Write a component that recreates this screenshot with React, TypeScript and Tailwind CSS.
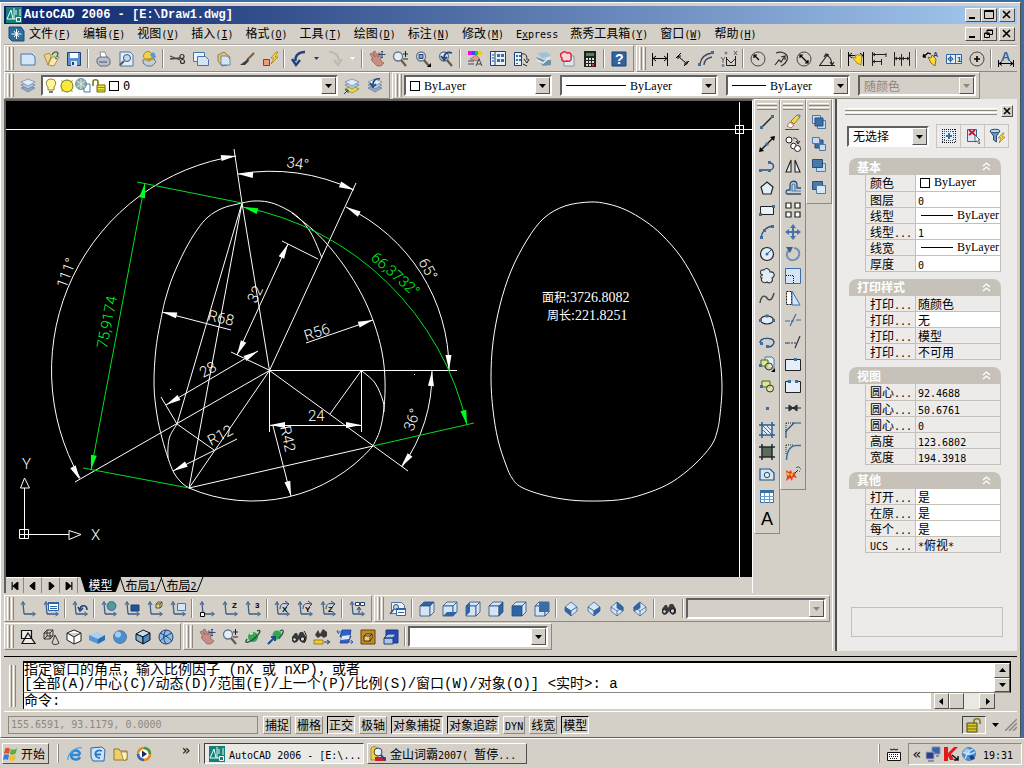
import type { ReactNode } from "react";
import { clsx } from "clsx";

type Point = [number, number];

const NAVY = "#1f3f73";
const BLUE = "#3a6ea5";
const PALE = "#d3e5f7";

// SimSun-like setting: full-width glyphs at 12px, latin at half that advance
function T({ text }: { text: string }) {
  return (
    <>
      {text.split(/([\u2e80-\uffef]+)/).map((part, i) =>
        i % 2 ? (
          part
        ) : part ? (
          <span key={i} className="whitespace-pre font-['DejaVu_Sans_Mono',monospace] text-[10px] leading-none">
            {part}
          </span>
        ) : null
      )}
    </>
  );
}

/* ---------- icons ---------- */

const hand = (
  <>
    <path d="M1 3l2-1 3 4-2-5 2-1 3 6 0-4 2 0 1 8 3 2-3 3H8L4 11 2 8l2 0z" fill="#c98d84" stroke="#7c4f4b" strokeWidth=".6" />
    <path d="M13 0v7M9.500 3.500h7M12 1l1-1 1 1M12 6l1 1 1-1" stroke={NAVY} fill="none" strokeWidth=".9" />
  </>
);
const lens = (
  <>
    <circle cx="6" cy="5.500" r="4.500" fill="#e3eef7" stroke="#667788" strokeWidth="1.300" />
    <path d="M9 9l5 6" stroke="#6b5a48" strokeWidth="2.200" />
  </>
);
const axes = (
  <>
    <path d="M3 2l1 11M4 13h10" stroke="#3b5d8c" strokeWidth="1.300" fill="none" />
    <path d="M1 4l2-3.500L5 4M12.500 11l3 2-3 2" stroke="#3b5d8c" fill="none" />
  </>
);
const bolt = <path d="M14 1L9 7h3l-3 6 7-7h-3l3-5z" fill="#ffd83a" stroke="#8a6b00" strokeWidth=".6" />;
const globe = (
  <>
    <circle cx="8" cy="8" r="6.500" fill="#4c8fd0" stroke="#2a5a94" strokeWidth=".6" />
    <circle cx="6" cy="5.500" r="3" fill="#b9dbf6" opacity=".8" />
  </>
);
const binoculars = (
  <>
    <path d="M1 8l3-4 2 0 1 3 2-4 3 0 3 5v4l-3 2-3-2-1-2-2 3-3 1-2-2z" fill="#3a3a3a" />
    <circle cx="3.500" cy="10.500" r="1.900" fill="#c9d2da" stroke="#111" />
    <circle cx="11.500" cy="10" r="2.200" fill="#c9d2da" stroke="#111" />
  </>
);
const sheets = (
  <>
    <path d="M1 10l7 4 7-4-7-3z" fill="#8fa9c4" stroke="#54718f" strokeWidth=".6" />
    <path d="M1 7l7 4 7-4-7-3z" fill="#b4cbe0" stroke="#54718f" strokeWidth=".6" />
    <path d="M1 4l7 4 7-4-7-3z" fill="#e0ecf7" stroke="#54718f" strokeWidth=".6" />
  </>
);

function Cube({ top = PALE, left = PALE, right = PALE }: { top?: string; left?: string; right?: string }) {
  return (
    <g stroke="#294f7c" strokeWidth=".8">
      <path d="M1 5l4-4h10l-4 4z" fill={top} />
      <path d="M1 5h10v10H1z" fill={left} />
      <path d="M11 5l4-4v10l-4 4z" fill={right} />
    </g>
  );
}

function Iso({ top = PALE, left = PALE, right = PALE }: { top?: string; left?: string; right?: string }) {
  return (
    <g stroke="#3c6591" strokeWidth=".8">
      <path d="M8 1l6 5-6 4-6-4z" fill={top} />
      <path d="M2 6l6 4v5l-6-5z" fill={left} />
      <path d="M14 6l-6 4v5l6-5z" fill={right} />
    </g>
  );
}

function Letter({ x, y, size = 8, fill = "#000", children }: { x: number; y: number; size?: number; fill?: string; children: string }) {
  return (
    <text x={x} y={y} fontSize={size} fill={fill} fontWeight="bold" fontFamily="Liberation Sans, sans-serif">
      {children}
    </text>
  );
}

const icons: Record<string, ReactNode> = {
  new: <path d="M1 3h11l3 3v8H1z" fill={PALE} stroke="#4a77a8" />,
  open: (
    <>
      <path d="M1 4l5-2 2 3-3 9z" fill="#f0d67c" stroke="#8c7431" strokeWidth=".7" />
      <path d="M5 14l4-8h7l-5 9z" fill="#fbe9a3" stroke="#8c7431" strokeWidth=".7" />
      <path d="M9 4c1-3 4-4 6-2l-1 4M12 7l2 1" stroke="#3c6b40" fill="none" strokeWidth="1.300" />
    </>
  ),
  save: (
    <>
      <path d="M1.500 1.500h13v13h-13z" fill="#5c93cf" stroke={NAVY} />
      <path d="M4 2h8v5H4z" fill="#fff" />
      <path d="M5 10h6v5H5z" fill="#dbe6f0" />
      <path d="M6 11h2v3H6z" fill={NAVY} />
    </>
  ),
  print: (
    <>
      <path d="M5 1h5l2 6H6z" fill="#fff" stroke="#667" strokeWidth=".7" />
      <path d="M2 8l3-2h8l2 3v4l-3 2H5l-3-3z" fill="#b6bfce" stroke="#4c566a" strokeWidth=".8" />
      <path d="M4 11h8" stroke="#4c566a" />
    </>
  ),
  preview: (
    <>
      <path d="M2 1h10l3 3v11H2z" fill="#e1edf8" stroke="#4a77a8" />
      <circle cx="9" cy="7" r="3.500" fill="#c0d8ee" stroke="#456" />
      <path d="M6 10l-4 4" stroke="#555" strokeWidth="2" />
    </>
  ),
  publish: (
    <>
      <circle cx="7" cy="5" r="4.500" fill="#f4d04a" stroke="#8c6a14" strokeWidth=".7" />
      <path d="M2 9l4-1h7l2 3-4 4H6l-4-3z" fill="#bfd0e2" stroke="#45607f" strokeWidth=".8" />
      <path d="M9 3l4-2 2 5-3 3z" fill="#5b99d4" />
      <path d="M3 8l5 2 5-3" stroke="#c99a1c" strokeWidth="1.500" fill="none" />
    </>
  ),
  cut: (
    <>
      <path d="M0 5l10 4M0 8l10-1" stroke="#444" strokeWidth="1.300" />
      <circle cx="12" cy="5.500" r="2" fill="none" stroke="#333" strokeWidth="1.200" />
      <circle cx="12.500" cy="10.500" r="2" fill="none" stroke="#333" strokeWidth="1.200" />
    </>
  ),
  copy: (
    <>
      <path d="M.5 1.500h11v9H.5z" fill="#eaf3fb" stroke="#4a77a8" />
      <path d="M4.500 5.500h8l3 3v6h-11z" fill={PALE} stroke="#4a77a8" />
    </>
  ),
  paste: (
    <>
      <path d="M2 4l6-3 6 5-2 8-6 1-4-5z" fill="#e2c779" stroke="#7b6524" strokeWidth=".8" />
      <path d="M5 5h6l3 3v6H5z" fill={PALE} stroke="#4a77a8" strokeWidth=".8" />
    </>
  ),
  brush: (
    <>
      <path d="M15 2l-7 7" stroke="#7d5a3a" strokeWidth="2" />
      <path d="M9 8l1 2-4 4H1l4-3z" fill="#3a3a3a" />
    </>
  ),
  match: (
    <>
      {bolt}
      <path d="M1.500 8.500h6v6h-6z" fill="#f59a76" stroke="#1d5fa8" />
    </>
  ),
  undo: <path d="M14 1C7 1 4 5 4.500 10M1 8l4 6 4-5" fill="none" stroke="#24417a" strokeWidth="2.400" />,
  redo: <path d="M2 1c7 0 10 4 9.500 9M15 8l-4 6-4-5" fill="none" stroke="#bdb9b0" strokeWidth="2.200" />,
  pan: hand,
  zoomRt: (
    <>
      {lens}
      <path d="M11 3h5M13.500 0v6M11 8h5" stroke="#222" />
    </>
  ),
  zoomWin: (
    <>
      {lens}
      <path d="M4 3.500h4v4H4z" fill="#7fa9d4" stroke={NAVY} />
      <path d="M16 12v4h-4z" />
    </>
  ),
  zoomPrev: (
    <>
      {lens}
      <path d="M14 2C9 0 6 3 6 7M3 5l3 4 3-3" fill="none" stroke="#24417a" strokeWidth="1.800" />
    </>
  ),
  props: (
    <>
      <path d="M1 0h4v4H1z" fill="#f0f" />
      <path d="M5 0h3v4H5z" fill="#44f" />
      <path d="M8 0h3v4H8z" fill="#0c6" />
      <path d="M11 0h4v4h-4z" fill="#fc0" />
      <path d="M3 8l6-4 4 4-3 2z" fill="#d5a08f" stroke="#855" strokeWidth=".6" />
      <path d="M1 10h6M1 13h6M9 15l3-7 3 7M10 13h4" stroke="#446" fill="none" />
    </>
  ),
  designCenter: (
    <>
      <path d="M.5.500h15v14H.5z" fill="#eaf2fa" stroke={NAVY} />
      <path d="M5 1v13M2 4h2M2 7h2M2 10h2" stroke={NAVY} />
      <path d="M7 3h3v3H7zM11 3h3v3h-3zM7 8h3v3H7zM11 8h3v3h-3z" fill={BLUE} />
    </>
  ),
  toolPalette: (
    <>
      <path d="M1.500 1.500h7v13h-7z" fill="#eaf2fa" stroke={NAVY} />
      <path d="M3 4h2v2H3zM3 8h2v2H3zM3 12h2v1H3zM6 4h2v2H6zM6 8h2v2H6z" fill={BLUE} />
      <path d="M9 3c4-1 5 2 5 6M11 8l3 4 2-4M10 13l4 2" stroke="#222" fill="none" />
    </>
  ),
  sheetSet: (
    <>
      <path d="M1 2l10-1 4 4-9 2z" fill="#9ec2dc" />
      <path d="M0 6l8 3h7v5l-8 1z" fill="#6d93a9" />
      <path d="M1 9l6 3 7-6" stroke="#e6f1f7" strokeWidth="1.500" fill="none" />
    </>
  ),
  markup: (
    <>
      <path d="M5 5h10v10H5z" fill="#dce8f3" stroke="#899" />
      <path d="M3 2c2-2 4-1 5 0 3-1 5 1 4 4 1 3-1 5-4 4-3 1-6 0-5-3-2-2-2-4 0-5z" fill="#fbd5da" stroke="#d4213c" strokeWidth="1.400" />
    </>
  ),
  calc: (
    <>
      <path d="M2 0h12v16H2z" fill="#222" />
      <path d="M4 2h8v3H4z" fill="#3e8e4e" />
      <path d="M4 7h2v2H4zM7 7h2v2H7zM10 7h2v2h-2zM4 10h2v2H4zM7 10h2v2H7zM10 10h2v2h-2zM4 13h2v2H4zM7 13h2v2H7z" fill="#ddd" />
      <path d="M10 13h2v2h-2z" fill="#e33" />
    </>
  ),
  help: (
    <>
      <path d="M1 1h14v14H1z" fill="#2f65a7" stroke={NAVY} />
      <Letter x={4} y={13} size={14} fill="#fff">?</Letter>
    </>
  ),
  dimLinear: <path d="M.5 2v13M15.500 2v13M1 7.500h14M4 5L1 7.500 4 10M12 5l3 2.500-3 2.500" stroke="#000" fill="none" />,
  dimAligned: <path d="M1 7l5-5M9 15l5-5M3 5l9 8M3 8V5h3M12 10v3H9" stroke="#000" fill="none" />,
  dimArc: (
    <>
      <path d="M2 13C3 6 7 3 14 2M6 14c0-4 3-7 8-8" stroke="#445" fill="none" strokeWidth="1.300" />
      <path d="M0 12h3v3H0zM13 0h3v3h-3z" fill={BLUE} />
    </>
  ),
  dimOrdinate: (
    <>
      <path d="M5.500 6v8.500H15M5 7l5 5 5-5M14.500 5v10" stroke="#222" fill="none" />
      <path d="M0 6l2 3 2-3M2 9v3M13 0l3 4M16 0l-3 4" stroke="#446" fill="none" strokeWidth=".8" />
      <circle cx="5" cy="2" r="1" fill="none" stroke="#446" strokeWidth=".7" />
      <circle cx="2" cy="14.500" r="1" fill="none" stroke="#446" strokeWidth=".7" />
    </>
  ),
  dimRadius: (
    <>
      <circle cx="8" cy="8" r="7" fill="none" stroke="#444" />
      <path d="M9 9L4 4M4 7V4h3" stroke="#000" fill="none" strokeWidth="1.200" />
    </>
  ),
  dimJogged: <path d="M3 2c7-3 13 2 11 7-1 3-4 5-6 6M2 14l4-5 2 2 4-6M8 6l4-1v4" stroke="#333" fill="none" strokeWidth="1.200" />,
  dimDiameter: (
    <>
      <circle cx="8" cy="8" r="7" fill="none" stroke="#444" />
      <path d="M4 4l8 8M4 7V4h3M12 9v3H9" stroke="#000" fill="none" strokeWidth="1.200" />
    </>
  ),
  dimAngular: <path d="M0 14.500h16M1 14L9 3M6 4c5 1 6 4 7 9M5 6l2-3 3 1M11 11l2 3 2-3" stroke="#222" fill="none" strokeWidth="1.100" />,
  dimQuick: (
    <>
      <path d="M.5 1v14M15.500 1v14M1 4.500h14M4 2L1 4.500 4 7M12 2l3 2.500L12 7" stroke="#000" fill="none" />
      <path d="M14 4l-1 10-4-2-5-6 4 1-1-3z" fill="#ffd83a" stroke="#8a6b00" strokeWidth=".7" />
    </>
  ),
  dimBaseline: <path d="M1.500 1v14M1 3.500h14M15 2v4M1 10.500h9M10.500 8v6M4 2L2 3.500 4 5M4 9l-2 1.500L4 12" stroke="#222" fill="none" />,
  dimContinue: <path d="M.5 1v14M7.500 3v12M15.500 1v14M1 7.500h14M3 6L1 7.500 3 9M5 6l2 1.500L5 9M10 6L8 7.500 10 9M13 6l2 1.500L13 9" stroke="#222" fill="none" />,
  leader: (
    <>
      <path d="M0 6l5-4 3 1M0 6l3 0M0 6l1-3" stroke="#000" fill="none" strokeWidth="1.300" />
      <path d="M9 4l4 4-1 7-4-3-3-6 3 1z" fill="#ffd83a" stroke="#6b5a00" strokeWidth=".8" />
      <Letter x={10} y={6} size={7} fill={NAVY}>A</Letter>
    </>
  ),
  tolerance: (
    <>
      <path d="M.5 3.500h15v9H.5z" fill="#e3effa" stroke="#2f65a7" />
      <path d="M9.500 3v10M4.500 4.500v7M1.500 8h6" stroke="#2f65a7" />
      <circle cx="4.500" cy="8" r="2" fill="none" stroke="#2f65a7" />
      <Letter x={11} y={11} size={8} fill={NAVY}>1</Letter>
    </>
  ),
  centerMark: (
    <>
      <circle cx="8" cy="8" r="7" fill="none" stroke="#444" />
      <path d="M5 8h6M8 5v6" stroke="#000" strokeWidth="1.600" />
    </>
  ),
  dimEdit: (
    <>
      <Letter x={3} y={10} size={13} fill="#2f65a7">A</Letter>
      <path d="M.5 9v7M15.500 9v7M1 12.500h14M4 10.500l-3 2 3 2M12 10.500l3 2-3 2" stroke="#000" fill="none" />
    </>
  ),
  layers: sheets,
  layerCurrent: (
    <>
      <path d="M1 11l7 4 7-4-7-3z" fill="#f2d43c" stroke="#7b6c1a" strokeWidth=".6" />
      <path d="M1 7l7 4 7-4-7-3z" fill="#b4cbe0" stroke="#54718f" strokeWidth=".6" />
      <path d="M1 4l7 4 7-4-7-3z" fill="#e0ecf7" stroke="#54718f" strokeWidth=".6" />
      <path d="M0 16l4-4M4 15v-3H1" stroke={NAVY} fill="none" />
    </>
  ),
  layerPrev: (
    <>
      {sheets}
      <path d="M13 1C8 0 6 3 6 7M3 5l3 4 3-3" stroke={NAVY} fill="none" strokeWidth="1.600" />
    </>
  ),
  bulb: (
    <>
      <path d="M8 1c-5 0-6 5-3 8v3h6V9c3-3 2-8-3-8z" fill="#fdf79a" stroke="#8d8330" />
      <path d="M6 13h4v2H6z" fill="#777" />
    </>
  ),
  sun: (
    <>
      <path d="M2 2l3 1 6 0 3-1-1 3v6l1 3-3-1H5l-3 1 1-3V5z" fill="#e8b31f" />
      <circle cx="8" cy="8" r="6" fill="#ffe63c" stroke="#5d7b36" />
    </>
  ),
  freeze: (
    <>
      <path d="M9 6h6v8H9z" fill="#fff" stroke="#4a77a8" />
      <circle cx="6" cy="6" r="5.500" fill="#8eb0a8" stroke="#527483" strokeWidth=".7" />
      <path d="M2 3l8 6M10 3L2 9M6 1v10" stroke="#dceae6" />
    </>
  ),
  unlock: (
    <>
      <path d="M2 8V4c0-3 5-3 5 0v3" fill="none" stroke="#7c7a1c" strokeWidth="1.600" />
      <path d="M6 7h8v7H6z" fill="#f3e637" stroke="#6c6a18" />
      <path d="M6 9.500h8M6 12h8" stroke="#8f8c20" />
    </>
  ),
  line: (
    <>
      <path d="M2 14L14 2" stroke="#222" strokeWidth="1.300" />
      <path d="M1 12h3v3H1zM12 1h3v3h-3z" fill={BLUE} />
    </>
  ),
  xline: (
    <>
      <path d="M2 14L14 2" stroke="#111" strokeWidth="1.300" />
      <path d="M0 16l1-5 4 4zM16 0l-1 5-4-4z" />
      <path d="M6.500 6.500h3v3h-3z" fill={BLUE} />
    </>
  ),
  pline: (
    <>
      <path d="M2 12h8c6 0 6-8 0-7" stroke="#26507f" fill="none" strokeWidth="1.400" />
      <path d="M0 11h3v3H0zM9 3h3v3H9zM9 11h3v3H9z" fill={BLUE} />
    </>
  ),
  polygon: <path d="M8 2l6 5-2 7H4L2 7z" fill="#e1eef8" stroke="#222" strokeWidth="1.200" />,
  rect: (
    <>
      <path d="M1.500 4.500h13v8h-13z" fill="#e9f2fa" stroke="#222" />
      <path d="M0 11h3v3H0zM13 3h3v3h-3z" fill={BLUE} />
    </>
  ),
  arc: (
    <>
      <path d="M2 14C3 7 7 3 14 2" stroke="#26507f" fill="none" strokeWidth="1.300" />
      <path d="M1 12h3v3H1zM4 5h3v3H4zM12 1h3v3h-3z" fill={BLUE} />
    </>
  ),
  circle: (
    <>
      <circle cx="8" cy="8" r="6.500" fill="#e1eef8" stroke="#222" strokeWidth="1.200" />
      <path d="M8 8l4-4" stroke="#26507f" />
      <circle cx="8" cy="8" r="1.500" fill={BLUE} />
    </>
  ),
  cloud: <path d="M4 7C0 6 1 1 5 2c2-3 6-1 6 2 4-1 6 4 2 6 2 4-3 6-5 4-3 2-7-1-5-4-2 0-2-3 1-3z" fill="#e1eef8" stroke="#333" strokeWidth="1.100" />,
  spline: <path d="M1 13C2 5 6 5 8 8s5 3 7-5" fill="none" stroke="#444" strokeWidth="1.400" />,
  ellipse: (
    <>
      <ellipse cx="8" cy="8" rx="6.500" ry="4" fill="#e1eef8" stroke="#222" strokeWidth="1.200" />
      <path d="M0 7h3v3H0zM13 7h3v3h-3zM6.500 2.500h3v3h-3z" fill={BLUE} />
    </>
  ),
  ellipseArc: (
    <>
      <path d="M1 9c0-6 13-6 14-1 0 3-3 5-6 5" fill="none" stroke="#26507f" strokeWidth="1.400" />
      <path d="M1 8h3v3H1zM7 11h3v3H7z" fill={BLUE} />
    </>
  ),
  insert: (
    <>
      <path d="M6 1h7l2 2v9H6z" fill="#e1eef8" stroke="#4a77a8" />
      <path d="M2 4h7v6H2z" fill="#dce98a" stroke="#4e6130" />
      <circle cx="10" cy="10.500" r="3.500" fill="#e9ef9a" fillOpacity=".6" stroke="#333" />
      <path d="M0 8h3v3H0z" fill={BLUE} />
      <path d="M16 12v4h-4z" />
    </>
  ),
  block: (
    <>
      <path d="M3 3h8v6H3z" fill="#dce98a" stroke="#4e6130" />
      <circle cx="11" cy="10.500" r="3.500" fill="#e9ef9a" fillOpacity=".6" stroke="#333" />
      <path d="M1 7h3v3H1z" fill={BLUE} />
    </>
  ),
  point: <path d="M7 7h3v3H7z" fill={BLUE} />,
  hatch: (
    <>
      <path d="M3 3h10v10H3z" fill="#e1eef8" />
      <path d="M4 8l4 4M4 4l8 8M8 4l4 4" stroke="#3a6ea5" />
      <path d="M3 0v16M13 0v16M0 3h16M0 13h16" stroke="#2d5c8e" strokeWidth="1.500" />
    </>
  ),
  gradient: (
    <>
      <path d="M3 3h10v10H3z" fill="#5f6a57" />
      <path d="M3 0v16M13 0v16M0 3h16M0 13h16" stroke="#1c2a36" strokeWidth="1.500" />
    </>
  ),
  region: (
    <>
      <path d="M1 3h10l4 4v7H1z" fill={PALE} stroke="#26507f" strokeWidth="1.200" />
      <circle cx="8" cy="9" r="2.700" fill="#ece9d8" stroke="#26507f" />
    </>
  ),
  table: (
    <>
      <path d="M1.500 2.500h13v12h-13z" fill="#fff" stroke={BLUE} />
      <path d="M1 2h14v3H1z" fill={BLUE} />
      <path d="M1 8.500h14M1 11.500h14M5.500 5v10M10.500 5v10" stroke="#6a9ad0" />
    </>
  ),
  mtext: (
    <text x="2" y="15" fontSize="18" fontFamily="Liberation Sans, sans-serif">
      A
    </text>
  ),
  erase: (
    <>
      <path d="M6 7l6-6 3 2-6 7z" fill="#f2d84a" stroke="#6c5a18" strokeWidth=".7" />
      <path d="M5 8l4 3-3 3-4-2z" fill="#fff" stroke="#844" strokeWidth=".7" />
      <path d="M6 7l3 3-1 1-3-3z" fill="#e0813a" />
      <path d="M12 1l2-1 2 2-1 1z" fill="#5c93cf" />
      <path d="M0 15.500h14" stroke="#8a3a1a" />
    </>
  ),
  dup: (
    <>
      <circle cx="4" cy="4" r="3" fill="#fff" stroke="#222" />
      <circle cx="8.500" cy="10" r="2.800" fill="#fff" stroke="#222" />
      <circle cx="12.500" cy="12.500" r="3" fill="#fff" stroke="#222" />
      <path d="M8 2c4 0 5 2 5 5M11 5l2 3 2-3" stroke="#222" fill="none" />
    </>
  ),
  mirror: <path d="M6 2v12H1zM10 2v12h5z" fill="#e1eef8" stroke="#222" strokeWidth="1.100" />,
  offset: (
    <>
      <path d="M16 14H2c-2-1-1-4 1-4h2V5c0-5 7-5 7 0v3h4" stroke="#26507f" fill="none" strokeWidth="1.300" />
      <path d="M16 11H7V5.500c0-2 3-2 3 0V11" stroke="#4a7fb8" fill="none" strokeWidth="1.200" />
    </>
  ),
  array: <path d="M1 1h5v5H1zM10 1h5v5h-5zM1 10h5v5H1zM10 10h5v5h-5z" fill="#fff" stroke="#222" strokeWidth="1.200" />,
  move: <path d="M8 0l3 4H9v3h3V5l4 3-4 3V9H9v3h2l-3 4-3-4h2V9H4v2L0 8l4-3v2h3V4H5z" fill="#4674a8" />,
  rotate: (
    <>
      <path d="M9 2c4 0 6 4 5 7-1 5-8 7-11 3-2-3-1-6 1-8" stroke="#6d90b5" strokeWidth="2" fill="none" />
      <path d="M1 1h7L5 7z" fill="#3a5f88" />
    </>
  ),
  scale: (
    <>
      <path d="M.5.500h15v15H.5z" fill={PALE} stroke="#3a6ea5" />
      <path d="M1 7.500h7.500V15" stroke="#111" strokeDasharray="1 1" fill="none" />
    </>
  ),
  stretch: (
    <>
      <path d="M1.500 1.500h5v13h-5z" fill="#fff" stroke="#111" strokeDasharray="2 1" />
      <path d="M7 1l8 14H7z" fill={PALE} stroke="#3a6ea5" />
    </>
  ),
  trim: <path d="M0 9h5M11 8l5 0M6 9h1M8 9h1M5 14L11 2" stroke="#3a6ea5" strokeWidth="1.200" />,
  extend: <path d="M0 9h5M6 9h2M9 9h2M10 14l5-12" stroke="#334" strokeWidth="1.200" />,
  breakPt: (
    <>
      <path d="M.5 3.500h15v11H.5z" fill="#e4eff9" stroke="#222" />
      <path d="M9 2h3v3H9z" fill={BLUE} />
    </>
  ),
  breakLn: (
    <>
      <path d="M4 3.500H.5v11h15v-11H12" fill="#e4eff9" stroke="#222" />
      <path d="M3 2h3v3H3zM10 2h3v3h-3z" fill={BLUE} />
    </>
  ),
  join: <path d="M0 8h16M4 5l4 3-4 3zM12 5L8 8l4 3z" stroke="#223" fill="#345" />,
  chamfer: (
    <>
      <path d="M1 1h7M1 1v9" stroke="#222" strokeDasharray="1 1" />
      <path d="M8 1h8M1 16V9l8-8" stroke="#26507f" fill="none" strokeWidth="1.200" />
    </>
  ),
  fillet: (
    <>
      <path d="M1 1h7M1 1v9" stroke="#222" strokeDasharray="1 1" />
      <path d="M16 1.500h-5C5 2 2 6 1.500 16" stroke="#3a6ea5" fill="none" strokeWidth="1.500" />
    </>
  ),
  explode: (
    <>
      <path d="M1 4l3 2 2-2 1 3 4-1-1 3 2 3-4-1-1 4-2-3-4 3 1-4z" fill="#e2401c" />
      <path d="M1 6l4 2-2 2zM5 8l3-1-1 4z" fill="#ffc83c" />
      <path d="M10 7l3-3" stroke="#222" />
      <path d="M13 0v2M15 3h1M11 1l1 1M15 1l-1 1M14 5l1 1" stroke="#2f65a7" />
    </>
  ),
  orderFront: (
    <>
      <path d="M1.500 1.500h8v8h-8zM6.500 6.500h8v8h-8z" fill="#c5dcf2" stroke="#54799f" />
      <path d="M4 4h8v8H4z" fill="#3a6ea5" stroke="#274f7c" />
    </>
  ),
  orderBack: (
    <>
      <path d="M4 4h8v8H4z" fill="#3a6ea5" stroke="#274f7c" />
      <path d="M1.500 1.500h7v6h-7zM8.500 8.500h6v6h-6z" fill="#c5dcf2" stroke="#54799f" />
    </>
  ),
  orderAbove: (
    <>
      <path d="M5.500 5.500h9v8h-9z" fill="#c5dcf2" stroke="#54799f" />
      <path d="M1.500 1.500h10v8h-10z" fill="#4a78a8" stroke="#274f7c" />
    </>
  ),
  orderUnder: (
    <>
      <path d="M1.500 1.500h10v8h-10z" fill="#4a78a8" stroke="#274f7c" />
      <path d="M5.500 5.500h9v8h-9z" fill="#d8e7f5" stroke="#54799f" />
    </>
  ),
  ucs: axes,
  ucsNamed: (
    <>
      {axes}
      <path d="M5.500 1.500h10v8h-10z" fill="#fff" stroke="#2f65a7" />
      <path d="M5 1h11v2H5zM7 5h7v1H7zM7 7h7v1H7z" fill="#2f65a7" />
    </>
  ),
  ucsPrev: (
    <>
      {axes}
      <path d="M15 9c0-5-6-6-7-1M6 6l2 4 3-3" stroke="#24417a" fill="none" strokeWidth="1.600" />
    </>
  ),
  ucsWorld: (
    <>
      {axes}
      <circle cx="10.500" cy="5" r="4.500" fill="#4e93c8" stroke="#245" strokeWidth=".6" />
      <path d="M8 3l3-1 2 3-3 3z" fill="#4aa866" />
    </>
  ),
  ucsObject: (
    <>
      {axes}
      <path d="M7 4h8v6H7z" fill="#1f569a" stroke={NAVY} />
    </>
  ),
  ucsFace: (
    <>
      {axes}
      <path d="M9 3l2-2h4v4l-2 2H9z" fill="#e5dc7a" stroke="#333" strokeWidth=".8" />
      <path d="M9 3h4v4M13 3l2-2" stroke="#333" fill="none" strokeWidth=".8" />
    </>
  ),
  ucsView: (
    <>
      {axes}
      <path d="M7.500 2.500h8v7h-8z" fill={PALE} stroke="#4a77a8" />
    </>
  ),
  ucsOrigin: (
    <>
      {axes}
      <path d="M1.500 11.500h4v4h-4z" fill="#fff" stroke="#000" />
    </>
  ),
  ucsZ: (
    <>
      {axes}
      <Letter x={10} y={7}>Z</Letter>
    </>
  ),
  ucs3: (
    <>
      {axes}
      <Letter x={10} y={7}>3</Letter>
    </>
  ),
  ucsRotX: (
    <>
      {axes}
      <path d="M6 8c0-6 4-6 8-5M11 0l4 3-3 3" stroke="#24417a" fill="none" />
      <Letter x={8} y={11}>X</Letter>
    </>
  ),
  ucsRotY: (
    <>
      {axes}
      <path d="M6 8c0-6 4-6 8-5M11 0l4 3-3 3" stroke="#24417a" fill="none" />
      <Letter x={8} y={11}>Y</Letter>
    </>
  ),
  ucsRotZ: (
    <>
      {axes}
      <path d="M6 8c0-6 4-6 8-5M11 0l4 3-3 3" stroke="#24417a" fill="none" />
      <Letter x={8} y={11}>Z</Letter>
    </>
  ),
  ucsApply: (
    <>
      {axes}
      <path d="M6.500 1.500h4v3h-4zM11.500 1.500h4v3h-4z" fill="#fff" stroke={NAVY} />
      <path d="M10 12V7M8 9l2-3 2 3" stroke={NAVY} fill="none" />
    </>
  ),
  namedViews: (
    <>
      <path d="M1.500 1.500h10l3 3v8h-13z" fill="#eaf3fb" stroke="#4a77a8" />
      <circle cx="6" cy="6" r="2.500" fill="#c0d8ee" stroke="#456" />
      <path d="M6.500 7.500h9v7h-9z" fill="#fff" stroke="#2f65a7" />
      <path d="M6 7h10v2H6zM8 11h6v1H8z" fill="#2f65a7" />
      <path d="M0 13l4-5" stroke="#456" strokeWidth="1.500" />
    </>
  ),
  viewTop: <Cube top="#2f65a7" />,
  viewBottom: (
    <>
      <Cube />
      <path d="M1 15l4-4h10l-4 4z" fill="#2f65a7" />
    </>
  ),
  viewLeft: (
    <>
      <Cube />
      <path d="M1 5l4-4v10l-4 4z" fill="#2f65a7" />
    </>
  ),
  viewRight: <Cube right="#2f65a7" />,
  viewFront: <Cube left="#2f65a7" />,
  viewBack: (
    <>
      <Cube />
      <path d="M5 1h10v10H5z" fill="#3a6ea5" />
    </>
  ),
  isoSW: <Iso left="#2f65a7" />,
  isoSE: <Iso right="#2f65a7" />,
  isoNE: (
    <>
      <path d="M8 1l6 5v4l-6 5-6-5V6z" fill={PALE} stroke="#3c6591" strokeWidth=".8" />
      <path d="M8 1l6 5v4L8 7z" fill="#2f65a7" stroke="#3c6591" strokeWidth=".8" />
      <path d="M2 6l6 4 6-4M8 10v5" stroke="#3c6591" strokeWidth=".8" fill="none" />
    </>
  ),
  isoNW: (
    <>
      <path d="M8 1l6 5v4l-6 5-6-5V6z" fill={PALE} stroke="#3c6591" strokeWidth=".8" />
      <path d="M8 1L2 6v4l6-3z" fill="#2f65a7" stroke="#3c6591" strokeWidth=".8" />
      <path d="M2 6l6 4 6-4M8 10v5" stroke="#3c6591" strokeWidth=".8" fill="none" />
    </>
  ),
  camera: binoculars,
  wire2d: <path d="M1.500 1.500h10v8h-10zM8 4l7 10.500H2z" fill="#fff" fillOpacity=".6" stroke="#111" strokeWidth="1.200" />,
  wire3d: <path d="M1 4l3-3h6v6L7 10H1zM1 4h6v6M7 4l3-3M4 1v6L1 10M4 7h6M12 6l4 8c-2 2-6 2-7 0z" fill="none" stroke="#222" strokeWidth=".9" />,
  hidden: <path d="M8 1l7 3v8l-7 3-7-4V4zM1 4l7 4 7-4M8 8v7" fill="#fff" stroke="#222" />,
  flat: (
    <>
      <path d="M0 6l8-3 8 3-7 4z" fill="#a5d0f3" />
      <path d="M0 6l9 4v5l-9-4z" fill="#4f97d6" />
      <path d="M16 6l-7 4v5l7-4z" fill="#2f6eae" />
    </>
  ),
  gouraud: globe,
  flatEdges: (
    <g stroke="#111">
      <path d="M1 5l7-4 7 3-7 4z" fill="#c4dcf2" />
      <path d="M1 5l7 3v7l-7-4z" fill="#7fb0de" />
      <path d="M15 4L8 8v7l7-4z" fill="#4e88c0" />
    </g>
  ),
  gouraudEdges: (
    <>
      <circle cx="8" cy="8" r="7" fill="#8fbbe4" stroke="#1f3f73" />
      <path d="M2 4c5 2 9 5 12 8M14 4C9 6 5 9 2 12M8 1c-3 5-3 9 0 14" stroke="#1f3f73" fill="none" />
    </>
  ),
  orbit: (
    <>
      <circle cx="8" cy="8" r="5" fill="#35a552" />
      <path d="M5 5l3-1" stroke="#c8f2c8" strokeWidth="2" />
      <path d="M2 10c-4 6 4 3 9-2s5-8 1-6" fill="none" stroke="#1d5a3a" strokeWidth="1.400" />
    </>
  ),
  corbit: (
    <>
      <circle cx="9" cy="6" r="4.500" fill="#35a552" />
      <path d="M12 2c5-3 4 3-1 7" fill="none" stroke="#1d5a3a" strokeWidth="1.300" />
      <path d="M0 15l7-7M3 8h4v4" stroke="#1d4a8a" strokeWidth="2" fill="none" />
    </>
  ),
  swivel: (
    <>
      {binoculars}
      <path d="M13 2c3 4 3 8 0 12" stroke="#222" fill="none" />
    </>
  ),
  distance: (
    <>
      <path d="M1 6l3-5 2 4 3-5 4 3 0 4-3 2-3-2-3 2z" fill="#3a3a3a" />
      <path d="M0 11h9v4H0z" fill="#f2c92e" stroke="#7b6112" strokeWidth=".7" />
      <path d="M10 13h5M13 11l3 2-3 2" stroke={NAVY} fill="none" />
    </>
  ),
  clip: (
    <>
      <path d="M5 1h9l-1 6h1l-3 7H3l2-6H3z" fill="#2d5fd0" stroke={NAVY} strokeWidth=".8" />
      <path d="M5 7l8-1-1 4-8 1z" fill="#dce8fb" />
      <path d="M0 3h4M1 1L0 3l2 2M12 13h4M14 11l2 2-2 2" stroke="#2d5fd0" fill="none" />
    </>
  ),
  clipFront: (
    <>
      <path d="M1 1h14v14H1z" fill="#c98a1c" stroke="#5e4010" />
      <path d="M4 7l2-2h6v4l-2 3H4zM4 7h6v5M10 7l2-2" fill="#f0cf72" stroke="#111" strokeWidth=".8" />
    </>
  ),
  clipBack: (
    <>
      <path d="M3 1h12v13H3z" fill="#2745c8" stroke={NAVY} />
      <path d="M1 9l4-4h8l-3 4zM1 9h9v6H1z" fill="#a9c7ec" stroke={NAVY} />
    </>
  ),
  pickAdd: (
    <>
      <path d="M1 1h14v14H1z" fill="#e4eefa" />
      <path d="M1.500 1v14M14.500 1v14M1 1.500h14M1 14.500h14" stroke="#111" strokeDasharray="1 1" />
      <path d="M3.500 3v10M12.500 3v10M3 3.500h10M3 12.500h10" stroke="#555" strokeDasharray="1 1" />
      <path d="M8 5v6M5 8h6" stroke={BLUE} strokeWidth="2" />
    </>
  ),
  selectObj: (
    <>
      <path d="M2.500 1.500h9v12h-9z" fill="#dbe6f4" stroke="#2f65a7" />
      <path d="M4 2l6 5M10 2L4 7" stroke="#c8102e" strokeWidth="1.800" />
      <path d="M10 7v7l2-1 2 3 1-1-2-3h2z" fill="#fff" stroke="#345" strokeWidth=".8" />
    </>
  ),
  quickSelect: (
    <>
      <path d="M1 3h10L7.500 8v6l-3-2V8z" fill="#6f97bf" stroke="#2b4f78" />
      <ellipse cx="6" cy="3" rx="5" ry="1.800" fill="#bcd4ea" stroke="#2b4f78" />
      <path d="M14 5l-5 5h3l-2 5 6-6h-3l2-4z" fill="#ffd83a" stroke="#8a6b00" strokeWidth=".6" />
    </>
  ),
  appLogo: (
    <>
      <path d="M0 0h16v16H0z" fill="#157f78" />
      <path d="M1 12l4-9 2 9M8 1v11H1M10 3v5M14 2v7M8 12h3" stroke="#e8fffb" fill="none" />
      <path d="M10.500 10.500h4v4h-4z" stroke="#fff" fill="none" />
    </>
  ),
  docLogo: (
    <>
      <path d="M1 1h12l3 4v10H4L1 12z" fill="#2c6d9f" stroke="#174d78" />
      <path d="M8.500 3v10M3.500 8h10M6 5l5 6M11 5l-5 6" stroke="#fff" />
    </>
  ),
  flag: (
    <>
      <path d="M2 3c2-2 4-1 5 0L6 8C4 7 3 7 1 8z" fill="#e2502a" />
      <path d="M8 3c2 1 4 1 6-1l-1 5c-2 2-4 2-6 1z" fill="#5fae3c" />
      <path d="M1 9c2-1 3-1 5 0l-1 5c-2-1-3-1-5 0z" fill="#3e7ad6" />
      <path d="M7 9c2 1 4 1 6 0l-1 5c-2 1-4 1-6 0z" fill="#f3c02c" />
    </>
  ),
  ie: (
    <>
      <path d="M13 9H5M13 8.500C13 3 4 3 4 9c0 5 7 6 9 2" stroke="#2f86d6" strokeWidth="2.500" fill="none" />
      <path d="M1 14C0 8 9 0 15 2" stroke="#4aa3e8" fill="none" strokeWidth="1.300" />
    </>
  ),
  outlook: (
    <>
      <path d="M1 2l11-1 3 3-1 11-11 0-2-4z" fill="#cfe3f7" stroke="#2d67a8" />
      <path d="M12 5c-8-3-9 7-2 7M5 8.500h6" stroke="#2878c8" strokeWidth="1.800" fill="none" />
    </>
  ),
  folder: (
    <>
      <path d="M1 3h5l1 2h7v9H1z" fill="#f0cf6a" stroke="#94762a" />
      <path d="M8 6h6v6l-3 3z" fill="#fdf3cd" stroke="#94762a" strokeWidth=".7" />
    </>
  ),
  player: (
    <>
      <circle cx="8" cy="8" r="6" fill="#fff" stroke="#e48b22" strokeWidth="2.500" />
      <path d="M8 2a6 6 0 0 1 6 6" stroke="#3d9b3d" strokeWidth="2.500" fill="none" />
      <path d="M2 8a6 6 0 0 0 6 6" stroke="#2f65c7" strokeWidth="2.500" fill="none" />
      <path d="M6 4.500l5 3.500-5 3.500z" fill="#1d2c5c" />
    </>
  ),
  dict: (
    <>
      <path d="M1 2c3-2 5-2 6 0v12H1z" fill="#f6d32a" stroke="#946c10" strokeWidth=".7" />
      <path d="M5 11h11v4H5z" fill="#c8202c" />
      <circle cx="8" cy="6" r="4" fill="#e7f2fc" stroke="#345" />
      <path d="M11 9l4 5" stroke="#1f3f93" strokeWidth="2" />
    </>
  ),
  keyboard: (
    <>
      <path d="M1.500 6.500h13v8h-13z" fill="#fff" stroke="#111" />
      <path d="M3 8.500h10M3 10.500h10M4 12.500h8" stroke="#111" strokeDasharray="1 1" />
      <path d="M4 3l2 1 2-1 2 1 2-1" stroke="#111" fill="none" />
    </>
  ),
  network: (
    <>
      <path d="M7 1h8v7H7z" fill="#3c5fae" stroke="#888fb0" />
      <path d="M1 6h8v7H1z" fill="#27408c" stroke="#aab" />
      <path d="M3 15h6M11 10h3" stroke="#778" strokeWidth="1.500" />
    </>
  ),
  kav: (
    <>
      <path d="M1 1h4v6l6-6h4L8 8l3 6H7L5 10v5H1z" fill="#e01a1a" />
      <path d="M9 9l6 5M15 10v4h-4" stroke="#111" strokeWidth="1.500" fill="none" />
    </>
  ),
  net: (
    <>
      {globe}
      <path d="M2 6c4 3 8 3 12 0M4 13c2-6 5-9 8-10" stroke="#c8ecff" fill="none" strokeWidth="1.300" />
      <path d="M8 10l4-1 2 4-4 1z" fill="#1d3c8c" />
    </>
  ),
  lock: (
    <>
      <path d="M8 7V4c0-3 6-3 6 0v3" fill="none" stroke="#7c7a1c" strokeWidth="1.600" />
      <path d="M1 6h10v9H1z" fill="#d9c62a" stroke="#4c4a08" />
      <path d="M1 9h10M1 12h10" stroke="#6c6a10" />
    </>
  ),
};

function Icon({ name }: { name: string }) {
  return (
    <svg viewBox="0 0 16 16" className="block size-4 shrink-0 overflow-visible" aria-hidden="true">
      {icons[name]}
    </svg>
  );
}

/* ---------- shared controls ---------- */

const raised = "border border-t-white border-l-white border-r-[#505050] border-b-[#505050] bg-[#d4d0c8]";
const sunken = "border border-t-[#404040] border-l-[#404040] border-r-white border-b-white";

function Arrow({ dir, color = "#000" }: { dir: "up" | "down" | "left" | "right"; color?: string }) {
  const d = { down: "M0 2h7L3.500 6z", up: "M0 5h7L3.500 1z", left: "M5 0v7L1 3.500z", right: "M2 0v7l4-3.500z" }[dir];
  return (
    <svg viewBox="0 0 7 7" className="block size-[7px]" aria-hidden="true">
      <path d={d} fill={color} />
    </svg>
  );
}

interface ComboProps {
  label: string;
  value: string;
  className: string;
  lead?: ReactNode;
  disabled?: boolean;
  font?: string;
}

function Combo({ label, value, className, lead, disabled, font = "font-['Noto_Sans_CJK_SC',sans-serif]" }: ComboProps) {
  return (
    <div
      className={clsx(
        "flex h-[21px] shrink-0 items-center border-2 border-t-[#606060] border-l-[#606060] border-r-white border-b-white",
        disabled ? "bg-[#d4d0c8]" : "bg-white",
        className
      )}
    >
      {lead}
      <select
        aria-label={label}
        disabled={disabled}
        className={clsx("h-full min-w-0 flex-1 appearance-none bg-transparent px-1 text-[12px] leading-4 outline-none", font, disabled ? "text-[#8c8880]" : "text-black")}
      >
        <option>{value}</option>
      </select>
      <span className={clsx("pointer-events-none flex h-full w-[15px] items-center justify-center", raised)}>
        <Arrow dir="down" color={disabled ? "#8c8880" : "#000"} />
      </span>
    </div>
  );
}

function ToolButton({ name }: { name: string }) {
  return (
    <button type="button" aria-label={name} className="flex h-[22px] w-[23px] shrink-0 items-center justify-center">
      <Icon name={name} />
    </button>
  );
}

// "|" in a list is a separator, "v" a flyout arrow, "." a disabled one
function Tools({ list }: { list: string }) {
  return (
    <>
      {list.split(" ").map((name, i) => {
        if (name === "|")
          return (
            <span key={i} className="flex h-[19px] w-1.5 shrink-0 justify-center">
              <span className="w-0.5 border-l border-r border-l-[#8c8880] border-r-white" />
            </span>
          );
        if (name === "v" || name === ".")
          return (
            <button key={i} type="button" aria-label="history" className="flex w-[13px] shrink-0 justify-center">
              <svg viewBox="0 0 5 3" className="h-[3px] w-[5px]">
                <path d="M0 0h5L2.500 3z" fill={name === "v" ? NAVY : "#fff"} />
              </svg>
            </button>
          );
        return <ToolButton key={i} name={name} />;
      })}
    </>
  );
}

function Toolbar({ children }: { children: ReactNode }) {
  return (
    <div className="flex h-[27px] shrink-0 items-center border border-t-white border-l-white border-r-[#8c8880] border-b-[#8c8880] pr-[3px] pl-0.5">
      <div className="mr-0.5 flex h-[23px] gap-px">
        <span className="w-[3px] border-l border-r border-l-white border-r-[#8c8880]" />
        <span className="w-[3px] border-l border-r border-l-white border-r-[#8c8880]" />
      </div>
      {children}
    </div>
  );
}

function SideToolbar({ list }: { list: string }) {
  return (
    <div className="flex w-[26px] flex-col items-center self-start border border-t-white border-l-white border-r-[#8c8880] border-b-[#8c8880] pt-[3px] pb-1">
      <div className="mb-px flex w-5 flex-col gap-px">
        <span className="h-[3px] border-t border-b border-t-white border-b-[#8c8880]" />
        <span className="h-[3px] border-t border-b border-t-white border-b-[#8c8880]" />
      </div>
      {list.split(" ").map((name) => (
        <ToolButton key={name} name={name} />
      ))}
    </div>
  );
}

function WindowButtons({ restore }: { restore?: boolean }) {
  return (
    <div className="flex">
      <button type="button" aria-label="minimize" className={clsx("h-3.5 w-4", raised)}>
        <svg viewBox="0 0 14 12" className="block h-3 w-3.5"><path d="M3 8h6v2H3z" /></svg>
      </button>
      <button type="button" aria-label={restore ? "restore" : "maximize"} className={clsx("h-3.5 w-4", raised)}>
        <svg viewBox="0 0 14 12" className="block h-3 w-3.5" fill="none" stroke="#000">
          {restore ? <path d="M5 2h5.500v4.500H5zM5 2.500h5.500M2.500 5.500h5v4h-5zM2.500 5h5" /> : <path d="M2.500 1.500h9v8h-9zM2.500 2.500h9" />}
        </svg>
      </button>
      <button type="button" aria-label="close" className={clsx("ml-0.5 h-3.5 w-4", raised)}>
        <svg viewBox="0 0 14 12" className="block h-3 w-3.5"><path d="M3 2l7 7M10 2L3 9" stroke="#000" strokeWidth="1.600" /></svg>
      </button>
    </div>
  );
}

/* ---------- drawing ---------- */

function smooth(pts: Point[], closed = false) {
  const n = pts.length;
  const at = (i: number) => (closed ? pts[(i + n) % n] : pts[Math.max(0, Math.min(n - 1, i))]);
  let d = `M${pts[0]}`;
  for (let i = 0; i < (closed ? n : n - 1); i++) {
    const [a, b, c, e] = [at(i - 1), at(i), at(i + 1), at(i + 2)];
    d += `C${b[0] + (c[0] - a[0]) / 6} ${b[1] + (c[1] - a[1]) / 6} ${c[0] - (e[0] - b[0]) / 6} ${c[1] - (e[1] - b[1]) / 6} ${c}`;
  }
  return d;
}

const eggLeft: Point[] = [[242, 203], [223, 208], [208, 217], [197, 230], [185, 250], [173, 276], [166, 297], [162, 314], [156, 348], [154, 385], [157, 415], [162, 438], [168, 458], [174, 473], [182, 483], [189, 488]];
const eggRight: Point[] = [[292, 213], [312, 229], [327, 244], [345, 267], [362, 295], [374, 323], [382, 352], [385, 380], [384, 408], [380, 430], [373, 446]];
const eggTop: Point[] = [[242, 203], [254, 201], [268, 202], [282, 207], [298, 217], [311, 233], [322, 258]];
const egg: Point[] = [
  [590, 202], [608, 204], [626, 210], [645, 221], [662, 235], [681, 257], [697, 285], [711, 319], [719, 353], [722, 385],
  [720, 415], [717, 432], [711, 446], [694, 465], [672, 482], [650, 492], [625, 499], [598, 501], [570, 500], [543, 495],
  [521, 487], [512, 478], [506, 465], [498, 440], [493, 410], [491, 378], [493, 342], [500, 305], [511, 271], [527, 240], [544, 218], [565, 206],
];

// tip x, tip y, direction the arrow points to in degrees
const arrows: [number, number, number][] = [
  [236, 156, -8], [80, 480, 62], [238, 174, 184], [354, 190, 22], [346, 207, 208], [449, 370, 88],
  [432, 371, -86], [401, 467, 127], [162, 312, 193], [373, 320, -18], [288, 244, -64], [237, 355, 116],
  [258, 351, -30], [166, 405, 150], [173, 471, 153], [291, 496, 76], [270, 425, 180], [361, 425, 0],
];
const greenArrows: [number, number, number][] = [[145, 183, -79], [91, 470, 101], [243, 207, 196], [467, 425, 76]];

const dims: [string, number, number, number][] = [
  ["111°", 66, 289, -70], ["34°", 286, 167, 8], ["65°", 418, 262, 60], ["36°", 413, 432, -70],
  ["32", 256, 304, -64], ["28", 203, 378, -28], ["R68", 207, 320, 13], ["R56", 306, 341, -18],
  ["R12", 211, 446, -28], ["R42", 280, 427, 78], ["24", 308, 421, 0], ["X", 91, 540, 0], ["Y", 22, 469, 0],
];

function Drawing() {
  return (
    <svg className="block h-[476px] w-full" role="img" aria-label="Draw1.dwg" fontSize="15" fontWeight="300" fontFamily="Roboto, Liberation Sans, sans-serif">
      <g transform="translate(-6 -101)" fill="none" stroke="#fff" strokeWidth="1">
        <path d="M6 129.500h729M744 129.500h8M739.500 102v23M739.500 134v443M735.500 125.500h8v8h-8zM739.500 125v9M735 129.500h9" shapeRendering="crispEdges" />
        <path d={smooth(eggLeft)} />
        <path d={smooth(eggTop)} />
        <path d={smooth(eggRight)} />
        <path d="M373 446A160 160 0 0 1 189 488" />
        <path d={smooth([[362, 371], [375, 383], [383, 401], [384, 412]])} />
        <path d={smooth([[177, 424], [170, 436], [168, 447], [168, 458]])} />
        <path d={smooth(egg, true)} />
        <path d="M80 478A217 217 0 0 1 236 156M238 174A198 198 0 0 1 354 190M346 207A180 180 0 0 1 449 370M432 371A163 163 0 0 1 402 467" />
        <path d="M234 149L242 203L269.500 370.500L356 183M269.500 370.500L408 471M269.500 370.500L75 482M242 203L177 424L214 450M242 203L189 488L269.500 370.500M189 488L373 446" />
        <path d="M162 312L231 330M306 343L373 320M288 244L237 355M282 241L318 259M258 351L166 405M161 397L177 424M231 352L269 370M237 439L173 471M273 426L291 496M361 371L330 414" />
        <path d="M269 370.500h188M269.500 371v61M361.500 371v61M270 425.500h91" shapeRendering="crispEdges" />
        <path d="M19.500 529.500h9v9h-9zM24.500 488v50M19 534.500h50M24.500 478l-4 10h9zM81 534.500l-12-4v9z" />
        <g fill="#fff" stroke="none">
          <path d="M170 389h1v1h-1zM414 374h1v1h-1z" />
          {arrows.map(([x, y, a], i) => (
            <path key={i} d="M0 0L-15 3V-3z" transform={`translate(${x} ${y}) rotate(${a})`} />
          ))}
          {dims.map(([label, x, y, a]) => (
            <text key={label} transform={`translate(${x} ${y}) rotate(${a})`}>{label}</text>
          ))}
          <g fontSize="14" fontWeight="400" fontFamily="Liberation Serif, Noto Sans CJK SC, serif">
            <text x="542" y="302"><tspan fontSize="12">面积</tspan>:3726.8082</text>
            <text x="547" y="320"><tspan fontSize="12">周长</tspan>:221.8251</text>
          </g>
        </g>
        <path d="M137 182L242 203M145 183L91 470M83 468L189 488M373 446L474 423M243 207A286 286 0 0 1 467 425" stroke="#00e020" />
        <g fill="#00ff20" stroke="none">
          {greenArrows.map(([x, y, a], i) => (
            <path key={i} d="M0 0L-15 3V-3z" transform={`translate(${x} ${y}) rotate(${a})`} />
          ))}
          <text transform="translate(107 349) rotate(-79)">75,9174</text>
          <text transform="translate(370 259) rotate(41)">66,3732°</text>
        </g>
      </g>
    </svg>
  );
}

function LayoutTabs() {
  return (
    <div className="flex h-4 bg-[#d4d0c8]">
      {["M1 0v7M6 0v7L2 3.500z", "M5 0v7L1 3.500z", "M2 0v7l4-3.500z", "M6 0v7M1 0v7l4-3.500z"].map((d, i) => (
        <button key={i} type="button" aria-label="scroll tabs" className="flex w-[18px] items-center justify-center border-t border-r border-t-white border-r-[#8c8880]">
          <svg viewBox="0 0 7 7" className="size-2"><path d={d} stroke="#000" /></svg>
        </button>
      ))}
      <div className="ml-[3px] flex" role="tablist">
        {["模型", "布局1", "布局2"].map((tab, i) => (
          <button key={tab} type="button" role="tab" aria-selected={i === 0} className={clsx("relative flex h-[15px] items-center justify-center", i ? "w-[41px] text-black" : "w-[39px] text-white")}>
            <svg viewBox="0 0 43 15" preserveAspectRatio="none" className="absolute inset-0 size-full overflow-visible">
              <path d="M0 0l5 14.500h33L44 0" fill={i ? "#d4d0c8" : "#000"} stroke="#000" />
            </svg>
            <span className="relative leading-[14px]"><T text={tab} /></span>
          </button>
        ))}
      </div>
    </div>
  );
}

/* ---------- properties palette ---------- */

interface Row {
  name: string;
  value: string;
  kind?: "color" | "line";
  readOnly?: boolean;
}

const sections: { title: string; rows: Row[] }[] = [
  {
    title: "基本",
    rows: [
      { name: "颜色", value: "ByLayer", kind: "color" },
      { name: "图层", value: "0" },
      { name: "线型", value: "ByLayer", kind: "line" },
      { name: "线型...", value: "1" },
      { name: "线宽", value: "ByLayer", kind: "line" },
      { name: "厚度", value: "0" },
    ],
  },
  {
    title: "打印样式",
    rows: [
      { name: "打印...", value: "随颜色", readOnly: true },
      { name: "打印...", value: "无" },
      { name: "打印...", value: "模型", readOnly: true },
      { name: "打印...", value: "不可用", readOnly: true },
    ],
  },
  {
    title: "视图",
    rows: [
      { name: "圆心...", value: "92.4688", readOnly: true },
      { name: "圆心...", value: "50.6761", readOnly: true },
      { name: "圆心...", value: "0", readOnly: true },
      { name: "高度", value: "123.6802", readOnly: true },
      { name: "宽度", value: "194.3918", readOnly: true },
    ],
  },
  {
    title: "其他",
    rows: [
      { name: "打开...", value: "是" },
      { name: "在原...", value: "是" },
      { name: "每个...", value: "是" },
      { name: "UCS ...", value: "*俯视*", readOnly: true },
    ],
  },
];

const serif = "font-['Liberation_Serif',serif]";

function PropertyValue({ row }: { row: Row }) {
  if (!row.kind) return <T text={row.value} />;
  return (
    <span className={clsx("flex items-center whitespace-nowrap", serif)}>
      {row.kind === "color" ? (
        <span className="mr-1 ml-0.5 size-2.5 border border-black bg-white" />
      ) : (
        <span className="mr-1 ml-[3px] h-px w-8 bg-black" />
      )}
      {row.value}
    </span>
  );
}

function Palette() {
  return (
    <aside className="flex w-[180px] shrink-0 flex-col bg-[#edebea] pt-1.5">
      <div className="flex h-3 items-center gap-1 pr-1 pl-2">
        <div className="flex flex-1 flex-col gap-px">
          <span className="h-[3px] border-t border-b border-t-white border-b-[#8c8880]" />
          <span className="h-[3px] border-t border-b border-t-white border-b-[#8c8880]" />
        </div>
        <button type="button" aria-label="close palette" className={clsx("size-3", raised)}>
          <svg viewBox="0 0 10 10" className="block size-2.5"><path d="M2 2l6 6M8 2L2 8" stroke="#000" strokeWidth="1.500" /></svg>
        </button>
      </div>
      <div className="mt-[7px] flex h-6 items-center justify-between pr-2 pl-2.5">
        <Combo label="selection" value="无选择" className="w-[82px]" />
        <div className="flex border border-[#c9c5bd]">
          {["pickAdd", "selectObj", "quickSelect"].map((name) => (
            <span key={name} className="border-l border-[#c9c5bd] first:border-l-0">
              <ToolButton name={name} />
            </span>
          ))}
        </div>
      </div>
      <div className="mt-2.5 flex flex-col gap-[7px] pr-4 pl-3">
        {sections.map((section) => (
          <section key={section.title}>
            <h2 className="flex h-[17px] items-center justify-between rounded-t-lg bg-[#c6c2ba] pr-2.5 pl-2 font-bold text-white">
              {section.title}
              <svg viewBox="0 0 9 9" className="size-[9px]" fill="none" stroke="#fff" strokeWidth="1.300">
                <path d="M1 4l3.500-3L8 4M1 8l3.500-3L8 8" />
              </svg>
            </h2>
            <table className="ml-4 w-[calc(100%-16px)] table-fixed border-collapse">
              <tbody>
                {section.rows.map((row, i) => (
                  <tr key={i} className="h-4 border border-t-0 border-[#c3c0ba] leading-[15px]">
                    <th scope="row" className="w-[50px] overflow-hidden border-r border-[#c3c0ba] p-0 pl-1 text-left font-normal whitespace-nowrap">
                      <T text={row.name} />
                    </th>
                    <td className={clsx("overflow-hidden p-0 pl-0.5", !row.readOnly && "bg-white")}>
                      <PropertyValue row={row} />
                    </td>
                  </tr>
                ))}
              </tbody>
            </table>
          </section>
        ))}
      </div>
      <div className="mx-3.5 mt-auto mb-3.5 h-[30px] border border-[#c3c0ba]" />
    </aside>
  );
}

/* ---------- window ---------- */

const menus: [string, string][] = [
  ["文件", "F"], ["编辑", "E"], ["视图", "V"], ["插入", "I"], ["格式", "O"], ["工具", "T"], ["绘图", "D"],
  ["标注", "N"], ["修改", "M"], ["Express", ""], ["燕秀工具箱", "Y"], ["窗口", "W"], ["帮助", "H"],
];

const modes: [string, boolean][] = [
  ["捕捉", false], ["栅格", false], ["正交", true], ["极轴", false], ["对象捕捉", true],
  ["对象追踪", true], ["DYN", false], ["线宽", false], ["模型", true],
];

function MenuBar() {
  return (
    <nav className="flex h-5 items-center pr-0.5 pl-1">
      <Icon name="docLogo" />
      <div className="ml-[5px] flex flex-1 gap-3">
        {menus.map(([name, key]) => (
          <button key={name} type="button" className="leading-4 whitespace-nowrap">
            {key ? (
              <>
                {name}
                <span className="font-['DejaVu_Sans_Mono',monospace] text-[10px]">(<u>{key}</u>)</span>
              </>
            ) : (
              <span className="font-['DejaVu_Sans_Mono',monospace] text-[10px]">E<u>x</u>press</span>
            )}
          </button>
        ))}
      </div>
      <WindowButtons restore />
    </nav>
  );
}

function CommandLine() {
  const cmd = "font-['Liberation_Mono','Noto_Sans_CJK_SC',monospace] text-[14px]";
  return (
    <div className="flex h-[50px] pr-1.5 pl-1">
      <div className="mt-1 mr-1 flex h-[42px] w-[11px] gap-px pl-px">
        <span className="w-[3px] border-l border-r border-l-white border-r-[#8c8880]" />
        <span className="w-[3px] border-l border-r border-l-white border-r-[#8c8880]" />
      </div>
      <div className="min-w-0 flex-1">
        <div className="flex h-8 border border-t-2 border-black border-b-[#8c8880] bg-white">
          <div className={clsx("min-w-0 flex-1 leading-[14px] whitespace-pre", cmd)}>
            <p>指定窗口的角点，输入比例因子 (nX 或 nXP)，或者</p>
            <p>[全部(A)/中心(C)/动态(D)/范围(E)/上一个(P)/比例(S)/窗口(W)/对象(O)] &lt;实时&gt;: a</p>
          </div>
          <div className="flex w-4 flex-col">
            <button type="button" aria-label="scroll up" className={clsx("flex flex-1 items-center justify-center", raised)}><Arrow dir="up" /></button>
            <button type="button" aria-label="scroll down" className={clsx("flex flex-1 items-center justify-center", raised)}><Arrow dir="down" /></button>
          </div>
        </div>
        <div className="flex h-4 pr-4">
          <label htmlFor="command" className={clsx("border-l border-black bg-white leading-4", cmd)}>命令:</label>
          <input id="command" className={clsx("mr-[3px] min-w-0 flex-1 bg-white pl-1 outline-none", cmd)} />
          <button type="button" aria-label="scroll left" className={clsx("flex w-[15px] items-center justify-center", raised)}><Arrow dir="left" /></button>
          <span className={clsx("w-[15px]", raised)} />
          <span className="w-[15px] bg-[#eae8e4]" />
          <button type="button" aria-label="scroll right" className={clsx("flex w-4 items-center justify-center", raised)}><Arrow dir="right" /></button>
        </div>
      </div>
    </div>
  );
}

function StatusBar() {
  return (
    <footer className="flex h-[26px] items-center border-t border-white pl-1">
      <output className="mr-[5px] flex h-[18px] w-[250px] items-center border border-[#8c8880] pl-0.5 text-[#8c8880]">
        <T text="155.6591, 93.1179, 0.0000" />
      </output>
      <div className="flex gap-1">
        {modes.map(([name, on]) => (
          <button key={name} type="button" aria-pressed={on} className={clsx("h-[18px] px-px leading-4 whitespace-nowrap", on ? "border border-t-black border-l-black border-r-white border-b-white" : "border border-t-white border-l-white border-r-[#8c8880] border-b-[#8c8880]")}>
            <T text={name} />
          </button>
        ))}
      </div>
      <div className="ml-auto flex items-center gap-1.5">
        <button type="button" aria-label="lock toolbars" className={clsx("flex h-[18px] w-6 items-center justify-center", sunken)}>
          <Icon name="lock" />
        </button>
        <Arrow dir="down" />
        <svg viewBox="0 0 12 12" className="size-3"><path d="M0 12L12 0M4 12l8-8M8 12l4-4" stroke="#8c8880" strokeWidth="1.500" /></svg>
      </div>
    </footer>
  );
}

function TaskBar() {
  return (
    <div className="flex h-[30px] items-center border-t border-white bg-[#d4d0c8] pr-0.5 pl-0.5">
      <button type="button" className={clsx("flex h-[21px] w-[47px] items-center gap-0.5 leading-4 whitespace-nowrap", raised)}>
        <Icon name="flag" />
        开始
      </button>
      <span className="ml-2 h-[19px] w-0.5 border-l border-r border-l-white border-r-[#8c8880]" />
      <div className="ml-1 flex">
        <Tools list="ie outlook folder player" />
      </div>
      <button type="button" aria-label="more shortcuts" className="ml-[23px] w-4 pb-2 font-['DejaVu_Sans_Mono',monospace] text-[14px] leading-3">»</button>
      <span className="mr-1 ml-1 h-[19px] w-0.5 border-l border-r border-l-white border-r-[#8c8880]" />
      <button type="button" className={clsx("flex h-[21px] w-[160px] items-center gap-1 bg-[#ebe9e5] pl-1", sunken)}>
        <Icon name="appLogo" />
        <span className="leading-4 whitespace-nowrap"><T text="AutoCAD 2006 - [E:\..." /></span>
      </button>
      <button type="button" className={clsx("ml-[3px] flex h-[21px] w-[160px] items-center gap-1 pl-0.5", raised)}>
        <Icon name="dict" />
        <span className="leading-4 whitespace-nowrap"><T text="金山词霸2007( 暂停..." /></span>
      </button>
      <span className="ml-auto h-[19px] w-0.5 border-l border-r border-l-white border-r-[#8c8880]" />
      <span className="mx-1.5"><Icon name="keyboard" /></span>
      <div className="flex h-[22px] items-center gap-0.5 border border-t-[#8c8880] border-l-[#8c8880] border-r-white border-b-white pr-2 pl-0.5">
        <button type="button" aria-label="show hidden icons" className="w-3 font-['DejaVu_Sans_Mono',monospace] text-[14px] leading-3">«</button>
        <Icon name="network" />
        <Icon name="kav" />
        <Icon name="net" />
        <time className="ml-1 leading-4"><T text="19:31" /></time>
      </div>
    </div>
  );
}

export default function App() {
  const swatch = <span className="ml-1 size-2.5 shrink-0 border border-black bg-white" />;
  return (
    <div className="flex min-h-screen flex-col bg-[#3a6ea5] pt-0.5 font-['Noto_Sans_CJK_SC',sans-serif] text-[12px] leading-4 text-black">
      <div className="mr-[3px] flex flex-1 flex-col border border-t-white border-l-white border-r-[#505050] border-b-[#606060] bg-[#d4d0c8] px-[3px] pt-[3px]">
        <header className="flex h-[18px] items-center bg-linear-to-r/srgb from-[#0a246a] to-[#a6caf0] pr-0.5 pl-0.5">
          <Icon name="appLogo" />
          <h1 className="flex-1 pl-0.5 font-['Liberation_Mono',monospace] text-[12px] font-bold text-white">AutoCAD 2006 - [E:\Draw1.dwg]</h1>
          <WindowButtons />
        </header>
        <MenuBar />

        <div className="flex gap-0.5 overflow-hidden border-t border-[#aaa69e]">
          <Toolbar>
            <Tools list="new open save | print preview publish | cut copy paste brush match | undo v redo . | pan zoomRt zoomWin zoomPrev | props designCenter toolPalette sheetSet markup calc | help" />
          </Toolbar>
          <Toolbar>
            <Tools list="dimLinear dimAligned dimArc dimOrdinate | dimRadius dimJogged dimDiameter dimAngular | dimQuick dimBaseline dimContinue | leader tolerance centerMark | dimEdit" />
          </Toolbar>
        </div>
        <div className="flex gap-0.5">
          <Toolbar>
            <Tools list="layers" />
            <Combo
              label="layer"
              value="0"
              className="mx-0.5 w-[297px]"
              font="font-['DejaVu_Sans_Mono',monospace]"
              lead={
                <span className="flex items-center">
                  <Icon name="bulb" />
                  <Icon name="sun" />
                  <Icon name="freeze" />
                  <Icon name="unlock" />
                  <span className="ml-0.5 size-2.5 shrink-0 border border-black bg-white" />
                </span>
              }
            />
            <Tools list="layerCurrent layerPrev" />
          </Toolbar>
          <Toolbar>
            <div className="flex gap-2">
              <Combo label="color" value="ByLayer" className="w-[148px]" font={serif} lead={swatch} />
              <Combo label="linetype" value="ByLayer" className="w-[158px]" font={serif} lead={<span className="ml-1 h-px w-[60px] bg-black" />} />
              <Combo label="lineweight" value="ByLayer" className="w-[124px]" font={serif} lead={<span className="ml-1 h-px w-[34px] bg-black" />} />
              <Combo label="plot style" value="随颜色" className="w-[118px]" disabled />
            </div>
          </Toolbar>
        </div>

        <main className="flex flex-1">
          <div className="flex min-w-0 flex-1 flex-col pb-px">
            <div className="flex flex-1">
              <div className="mr-px flex min-w-0 flex-1 flex-col border-t-2 border-r border-l-2 border-t-[#606060] border-r-white border-l-[#606060]">
                <div className="flex-1 bg-black">
                  <Drawing />
                </div>
                <LayoutTabs />
              </div>
              <SideToolbar list="line xline pline polygon rect arc circle cloud spline ellipse ellipseArc insert block point hatch gradient region table mtext" />
              <SideToolbar list="erase dup mirror offset array move rotate scale stretch trim extend breakPt breakLn join chamfer fillet explode" />
              <SideToolbar list="orderFront orderBack orderAbove orderUnder" />
            </div>
            <div className="mt-0.5 flex gap-0.5">
              <Toolbar>
                <Tools list="ucs ucsNamed | ucsPrev | ucsWorld ucsObject ucsFace ucsView | ucsOrigin ucsZ ucs3 | ucsRotX ucsRotY ucsRotZ | ucsApply" />
              </Toolbar>
              <Toolbar>
                <Tools list="namedViews | viewTop viewBottom viewLeft viewRight viewFront viewBack | isoSW isoSE isoNE isoNW | camera |" />
                <Combo label="named view" value="" className="w-[140px]" disabled />
              </Toolbar>
            </div>
            <div className="mt-px flex gap-0.5">
              <Toolbar>
                <Tools list="wire2d wire3d hidden flat gouraud flatEdges gouraudEdges" />
              </Toolbar>
              <Toolbar>
                <Tools list="pan zoomRt orbit corbit swivel distance clip clipFront clipBack |" />
                <Combo label="3D view" value="" className="w-[140px]" />
              </Toolbar>
            </div>
          </div>
          <div className="w-[5px] shrink-0 border-r-2 border-l border-l-white border-r-[#505050]" />
          <Palette />
        </main>

        <div className="mt-1 mb-1 border-b border-black pt-px" />
        <CommandLine />
        <StatusBar />
      </div>
      <TaskBar />
    </div>
  );
}
